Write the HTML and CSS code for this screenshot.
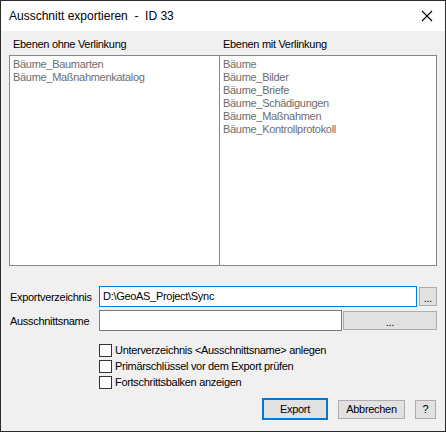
FILE: index.html
```html
<!DOCTYPE html>
<html lang="de">
<head>
    <meta charset="UTF-8">
    <title>Ausschnitt exportieren</title>
    <link rel="stylesheet" href="styles.css">
</head>
<body>
    <div class="window">
        <div class="titlebar">
            <span class="title">Ausschnitt exportieren&nbsp; -&nbsp; ID 33</span>
            <svg class="close" width="12" height="12" viewBox="0 0 12 12">
                <path d="M1 1 L11 11 M11 1 L1 11" stroke="#000" stroke-width="1.1" fill="none"/>
            </svg>
        </div>

        <div class="content">
            <div class="list-headers">
                <div class="list-header">Ebenen ohne Verlinkung</div>
                <div class="list-header">Ebenen mit Verlinkung</div>
            </div>
            <div class="lists">
                <div class="list">
                    <div class="item">Bäume_Baumarten</div>
                    <div class="item">Bäume_Maßnahmenkatalog</div>
                </div>
                <div class="list list-right">
                    <div class="item">Bäume</div>
                    <div class="item">Bäume_Bilder</div>
                    <div class="item">Bäume_Briefe</div>
                    <div class="item">Bäume_Schädigungen</div>
                    <div class="item">Bäume_Maßnahmen</div>
                    <div class="item">Bäume_Kontrollprotokoll</div>
                </div>
            </div>

            <div class="form-row first-row">
                <label class="form-label">Exportverzeichnis</label>
                <div class="text-input focused input-dir">D:\GeoAS_Project\Sync</div>
                <button class="btn btn-small">...</button>
            </div>
            <div class="form-row second-row">
                <label class="form-label">Ausschnittsname</label>
                <div class="text-input input-name"></div>
                <button class="btn btn-wide">...</button>
            </div>

            <div class="checks">
                <div class="check"><span class="box"></span>Unterverzeichnis &lt;Ausschnittsname&gt; anlegen</div>
                <div class="check"><span class="box"></span>Primärschlüssel vor dem Export prüfen</div>
                <div class="check"><span class="box"></span>Fortschrittsbalken anzeigen</div>
            </div>

            <div class="actions">
                <button class="btn btn-default">Export</button>
                <button class="btn btn-cancel">Abbrechen</button>
                <button class="btn btn-help">?</button>
            </div>
        </div>
    </div>
</body>
</html>
```

FILE: styles.css
```css
body {
    margin: 0;
    padding: 0;
    font-family: "Liberation Sans", Arial, sans-serif;
    font-size: 11px;
    letter-spacing: -0.3px;
    color: #000;
    background: #f0f0f0;
}

.window {
    width: 446px;
    height: 432px;
    box-sizing: border-box;
    border: 1px solid #2b2b2b;
    background: #f0f0f0;
    display: flex;
    flex-direction: column;
}

.titlebar {
    height: 30px;
    background: #fff;
    display: flex;
    align-items: center;
    justify-content: space-between;
    padding: 0 10px 0 8px;
}

.title {
    font-size: 12px;
    letter-spacing: 0;
    padding-bottom: 1px;
}

.close {
    display: block;
    margin-right: 2px;
}

.content {
    padding: 0 8px;
    display: flex;
    flex-direction: column;
}

.list-headers {
    height: 24px;
    display: flex;
}

.list-header {
    padding: 7px 0 0 4px;
    line-height: 13px;
}

.list-header:first-child {
    width: 206px;
}

.lists {
    height: 211px;
    box-sizing: border-box;
    border: 1px solid #828790;
    background: #fff;
    display: flex;
}

.list {
    width: 209px;
    box-sizing: border-box;
    padding: 2px 0 0 3px;
    color: #6d6d6d;
}

.list-right {
    flex: 1;
    border-left: 1px solid #828790;
}

.item {
    line-height: 13px;
}

.form-row {
    display: flex;
    align-items: center;
    height: 21px;
}

.first-row {
    margin-top: 20px;
}

.second-row {
    margin-top: 3px;
}

.form-label {
    width: 89px;
    padding-left: 1px;
    white-space: nowrap;
}

.text-input {
    height: 21px;
    box-sizing: border-box;
    border: 1px solid #7a7a7a;
    background: #fff;
    padding: 3px 0 0 3px;
    line-height: 13px;
}

.text-input.focused {
    border-color: #0078d7;
}

.input-dir {
    width: 318px;
    margin-right: 2px;
}

.input-name {
    width: 243px;
    margin-right: 1px;
}

.btn {
    font-family: inherit;
    font-size: 11px;
    letter-spacing: -0.3px;
    color: #000;
    background: #e1e1e1;
    border: 1px solid #adadad;
    box-sizing: border-box;
    padding: 0;
    margin: 0;
}

.btn-small {
    width: 18px;
    height: 19px;
    line-height: 17px;
    padding-top: 2px;
}

.btn-wide {
    width: 94px;
    height: 19px;
    padding-top: 2px;
}

.checks {
    margin: 13px 0 0 90px;
}

.check {
    display: flex;
    align-items: flex-start;
    height: 16px;
    line-height: 13px;
}

.box {
    width: 13px;
    height: 13px;
    box-sizing: border-box;
    border: 1px solid #333;
    background: #fff;
    margin-right: 3px;
}

.actions {
    margin-top: 6px;
    display: flex;
    justify-content: flex-end;
    align-items: center;
    padding-right: 1px;
    height: 22px;
}

.btn-default {
    width: 66px;
    height: 22px;
    border: 2px solid #0078d7;
    margin-right: 10px;
}

.btn-cancel {
    width: 67px;
    height: 19px;
    margin-right: 10px;
}

.btn-help {
    width: 21px;
    height: 19px;
}
```
